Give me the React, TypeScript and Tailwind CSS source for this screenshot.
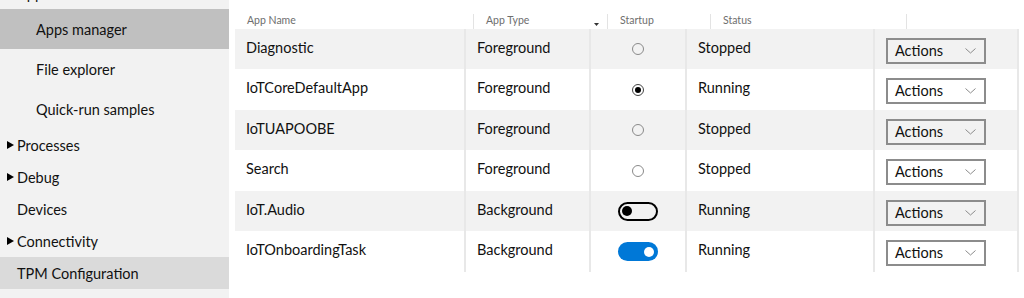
import React from "react";

const FONT = { fontFamily: '"Segoe UI", Lato, "Noto Sans", sans-serif' };

function Tri() {
  return (
    <svg width="7" height="8" viewBox="0 0 7 8" className="mr-[3px] -mt-[2px]">
      <polygon points="0,0 7,4 0,8" fill="#000" />
    </svg>
  );
}

function Radio({ on }: { on: boolean }) {
  return (
    <div className={`w-[12px] h-[12px] rounded-full border flex items-center justify-center ${on ? "border-[#444]" : "border-[#8a8a8a]"}`}>
      {on && <div className="w-[6px] h-[6px] rounded-full bg-black" />}
    </div>
  );
}

function Toggle({ on }: { on: boolean }) {
  return on ? (
    <div className="w-[40px] h-[19px] rounded-full bg-[#0078d7] flex items-center justify-end pr-[4px]">
      <div className="w-[10px] h-[10px] rounded-full bg-white" />
    </div>
  ) : (
    <div className="w-[40px] h-[19px] rounded-full border-2 border-black flex items-center pl-[2px]">
      <div className="w-[10px] h-[10px] rounded-full bg-black" />
    </div>
  );
}

function ActionsBtn() {
  return (
    <div className="mt-[3px] w-[100px] h-[26px] border-2 border-[#8c8c8c] flex items-center justify-between pl-[7px] pr-[8px]">
      <span className="text-[14.5px] text-[#111] leading-none mt-[1px]">Actions</span>
      <svg width="11" height="6" viewBox="0 0 11 6">
        <polyline points="0.5,0.5 5.5,5 10.5,0.5" fill="none" stroke="#8a8a8a" strokeWidth="1" />
      </svg>
    </div>
  );
}

type Row = { name: string; type: string; startup: "radio" | "radioOn" | "toggle" | "toggleOn"; status: string };

const rows: Row[] = [
  { name: "Diagnostic", type: "Foreground", startup: "radio", status: "Stopped" },
  { name: "IoTCoreDefaultApp", type: "Foreground", startup: "radioOn", status: "Running" },
  { name: "IoTUAPOOBE", type: "Foreground", startup: "radio", status: "Stopped" },
  { name: "Search", type: "Foreground", startup: "radio", status: "Stopped" },
  { name: "IoT.Audio", type: "Background", startup: "toggle", status: "Running" },
  { name: "IoTOnboardingTask", type: "Background", startup: "toggleOn", status: "Running" },
];

const rowHeights = ["h-[40px]", "h-[41px]", "h-[40px]", "h-[41px]", "h-[40px]", "h-[41px]"];

export default function App() {
  return (
    <div className="flex w-[1024px] h-[298px] bg-white overflow-hidden text-black" style={FONT}>
      <aside className="w-[229px] shrink-0 bg-[#f2f2f2] flex flex-col text-[14.5px] text-[#111]">
        <div className="-mt-[23px] h-[32px] flex items-center pl-[17px] pt-[2px]">Apps</div>
        <div className="h-[40px] flex items-center pl-[36px] pt-[2px] bg-[#c0c0c0]">Apps manager</div>
        <div className="h-[40px] flex items-center pl-[36px] pt-[2px]">File explorer</div>
        <div className="h-[40px] flex items-center pl-[36px] pt-[2px]">Quick-run samples</div>
        <div className="h-[32px] flex items-center pl-[7px] pt-[1px]"><Tri />Processes</div>
        <div className="h-[32px] flex items-center pl-[7px] pt-[1px]"><Tri />Debug</div>
        <div className="h-[32px] flex items-center pl-[17px] pt-[1px]">Devices</div>
        <div className="h-[32px] flex items-center pl-[7px] pt-[1px]"><Tri />Connectivity</div>
        <div className="h-[32px] flex items-center pl-[17px] pt-[1px] bg-[#dadada]">TPM Configuration</div>
      </aside>
      <main className="flex-1 pl-[6px] pt-[12px]">
        <div className="h-[17px] flex text-[10.5px] text-[#6e6e6e]">
          <div className="w-[238px] flex items-center pl-[12px]">App Name</div>
          <div className="w-[134px] flex items-center pl-[12px] pr-[8px] justify-between border-l border-[#e3e3e3] mt-[2px]">
            <span className="-mt-[2px]">App Type</span>
            <svg width="5" height="3" viewBox="0 0 5 3" className="mt-[5px]"><polygon points="0,0 5,0 2.5,3" fill="#333" /></svg>
          </div>
          <div className="w-[103px] flex items-center pl-[12px] border-l border-[#e3e3e3] mt-[2px]"><span className="-mt-[2px]">Startup</span></div>
          <div className="w-[196px] flex items-center pl-[12px] border-l border-[#e3e3e3] mt-[2px]"><span className="-mt-[2px]">Status</span></div>
          <div className="w-[100px] border-l border-[#e3e3e3] mt-[2px]" />
        </div>
        {rows.map((r, i) => (
          <div key={r.name} className={`flex w-[784px] ${rowHeights[i]} ${i % 2 === 0 ? "bg-[#f2f2f2]" : "bg-white"} text-[14.5px] text-[#111]`}>
            <div className="w-[231px] border-r-2 border-[#e8e8e8] flex items-center pl-[11px]"><span className="-mt-[3px]">{r.name}</span></div>
            <div className="w-[125px] border-r-2 border-[#e8e8e8] flex items-center pl-[11px]"><span className="-mt-[3px]">{r.type}</span></div>
            <div className="w-[96px] border-r-2 border-[#e8e8e8] flex items-center justify-center">
              {r.startup === "radio" && <Radio on={false} />}
              {r.startup === "radioOn" && <Radio on={true} />}
              {r.startup === "toggle" && <Toggle on={false} />}
              {r.startup === "toggleOn" && <Toggle on={true} />}
            </div>
            <div className="w-[188px] border-r-2 border-[#e8e8e8] flex items-center pl-[11px]"><span className="-mt-[3px]">{r.status}</span></div>
            <div className="w-[144px] border-r-2 border-[#e8e8e8] flex items-center pl-[11px]"><ActionsBtn /></div>
          </div>
        ))}
      </main>
    </div>
  );
}
